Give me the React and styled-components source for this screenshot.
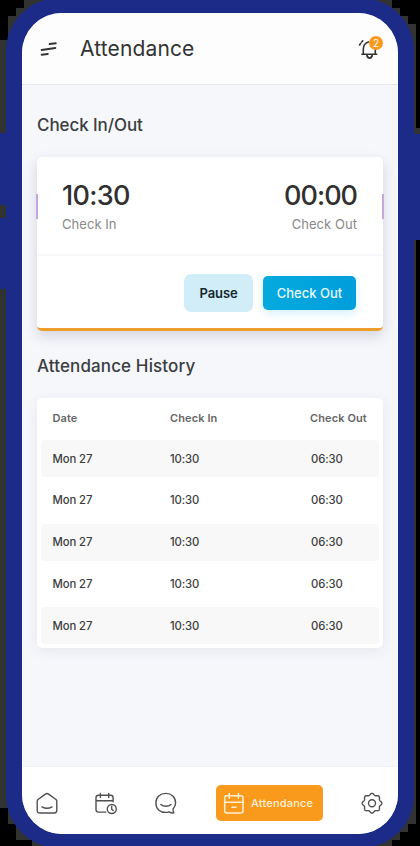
import React from "react";
import styled, { createGlobalStyle, css } from "styled-components";

const GlobalStyle = createGlobalStyle`
  *, *::before, *::after { box-sizing: border-box; }
  html, body { margin: 0; background: #000; }
  body { font-family: Inter, "Liberation Sans", sans-serif; color: #333; }
  button { font-family: inherit; border: 0; padding: 0; margin: 0; cursor: pointer; }
  h1, h2, p { margin: 0; }
`;

const block = (color, x, y, w, h) =>
  `linear-gradient(${color}, ${color}) ${x}px ${y}px / ${w}px ${h}px no-repeat`;

const backdrop = [
  block("#000", 0, 0, 24, 8),
  block("#000", 0, 8, 16, 8),
  block("#000", 0, 16, 8, 24),
  block("#1d2b88", 0, 133, 12, 72),
  block("#1d2b88", 0, 218, 12, 71),
  block("#000", 0, 808, 8, 38),
  block("#000", 8, 824, 8, 22),
  block("#000", 16, 840, 16, 6),
  block("#313331", 0, 0, 60, 846),
  block("#1d2b88", 408, 134, 12, 106),
  block("#000", 392, 0, 28, 8),
  block("#000", 400, 8, 20, 8),
  block("#000", 408, 16, 12, 8),
  block("#000", 408, 824, 12, 22),
  block("#000", 400, 832, 20, 14),
  block("#000", 392, 840, 28, 6),
  block("#333", 416, 128, 4, 8),
  block("#333", 360, 0, 56, 846),
].join(", ");

const Device = styled.div`
  width: 420px;
  height: 846px;
  padding: 0 6px;
  overflow: hidden;
  background: ${backdrop};
`;

const Bezel = styled.div`
  width: 408px;
  height: 850px;
  margin-top: -2px;
  padding: 15px 16px 14px;
  border-radius: 53px;
  background: #1d2b88;
`;

const Screen = styled.main`
  display: flex;
  flex-direction: column;
  width: 376px;
  height: 821px;
  overflow: hidden;
  border-radius: 40px;
  background: #f5f7fb;
`;

const Header = styled.header`
  display: flex;
  align-items: center;
  flex: none;
  height: 72px;
  padding: 1px 14px 0 18px;
  background: #fdfdfd;
  border-bottom: 1px solid #e5e7eb;
`;

const Title = styled.h1`
  flex: 1;
  margin-left: 22px;
  font-size: 21px;
  line-height: 28px;
  font-weight: 400;
  letter-spacing: 0.14px;
`;

const Alerts = styled.div`
  position: relative;
  width: 26px;
  height: 26px;
`;

const AlertCount = styled.span`
  position: absolute;
  top: 0;
  right: 1px;
  width: 14px;
  height: 14px;
  border-radius: 50%;
  background: #f99a1c;
  color: #fff;
  font-size: 10px;
  line-height: 14px;
  text-align: center;
`;

const Icon = styled.svg`
  display: block;
  flex: none;
  fill: none;
  stroke: currentColor;
  stroke-width: ${(p) => p.$weight || 1.4};
  stroke-linecap: round;
  stroke-linejoin: round;
`;

const Content = styled.div`
  flex: 1;
  padding: 28px 15px 0;
`;

const SectionTitle = styled.h2`
  height: 24px;
  font-size: 17px;
  line-height: 24px;
  font-weight: 500;
  color: #3b3d42;
  letter-spacing: ${(p) => p.$spacing || "0"};
`;

const TimeCard = styled.section`
  position: relative;
  height: 174px;
  margin: 20px 0 23px;
  border-radius: 5px;
  border-bottom: 3px solid #ec9d2b;
  background: #fff;
  box-shadow: 0 5px 13px rgba(50, 45, 85, 0.17);
`;

const EdgeMark = styled.span`
  position: absolute;
  top: 37px;
  ${(p) => p.$side}: -1px;
  width: 2px;
  height: 25px;
  background: #c3a7dd;
`;

const Times = styled.div`
  display: flex;
  justify-content: space-between;
  height: 99px;
  padding: 23px 26px 0 25px;
  border-bottom: 2px solid #f7f7f9;
`;

const TimeBlock = styled.div`
  text-align: ${(p) => p.$align || "left"};
`;

const TimeValue = styled.p`
  font-size: 27px;
  line-height: 32px;
  font-weight: 500;
  color: #303030;
  letter-spacing: ${(p) => p.$spacing};
`;

const TimeLabel = styled.p`
  margin-top: 3px;
  font-size: 13px;
  line-height: 18px;
  color: #888;
  letter-spacing: 0.05px;
`;

const Actions = styled.div`
  display: flex;
  align-items: center;
  justify-content: flex-end;
  gap: 10px;
  height: 73px;
  padding: 1px 27px 0 0;
`;

const ActionButton = styled.button`
  font-size: 13px;
  font-weight: 500;
  ${(p) =>
    p.$primary
      ? css`
          width: 93px;
          height: 34px;
          border-radius: 5px;
          color: #e9f9ff;
          background: linear-gradient(90deg, #05aade, #009edb);
          box-shadow: 0 3px 10px rgba(0, 165, 225, 0.18);
        `
      : css`
          width: 69px;
          height: 38px;
          border-radius: 7px;
          color: #15272f;
          font-weight: 600;
          letter-spacing: -0.1px;
          background: #d1edf8;
        `}
`;

const HistoryCard = styled.section`
  height: 250px;
  margin-top: 20px;
  padding: 0 4px;
  border-radius: 5px;
  background: #fff;
  box-shadow: 0 3px 13px rgba(50, 45, 85, 0.08);
`;

const HistoryRow = styled.div`
  display: grid;
  grid-template-columns: 117.5px 141px 1fr;
  align-items: center;
  height: 37px;
  margin-bottom: 4.75px;
  padding-left: 11.5px;
  border-radius: 4px;
  background: ${(p) => (p.$shaded ? "#f8f8f8" : "transparent")};
  font-size: 11.3px;
  font-weight: 500;
  letter-spacing: -0.1px;
  color: #3e3e3e;
`;

const HistoryHead = styled(HistoryRow)`
  height: 42px;
  margin-bottom: 0;
  padding-bottom: 2px;
  grid-template-columns: 117.5px 140px 1fr;
  font-size: 11px;
  font-weight: 600;
  letter-spacing: 0.1px;
  color: #666;
`;

const BottomNav = styled.nav`
  display: flex;
  align-items: center;
  flex: none;
  height: 68px;
  padding: 4px 14px 0 13px;
  background: #fff;
  border-top: 1px solid #eef0f5;
  color: #505050;
`;

const NavItem = styled.div`
  width: 24px;
  height: 24px;
  margin-right: ${(p) => p.$gap || 0}px;
`;

const ActiveItem = styled.div`
  display: flex;
  align-items: center;
  gap: 5px;
  width: 107px;
  height: 36px;
  margin-right: 37px;
  padding-left: 6px;
  border-radius: 5px;
  background: #f99a1c;
  color: #fff0d8;
  font-size: 11px;
  font-weight: 500;
  letter-spacing: 0.2px;
`;

const MenuIcon = () => (
  <Icon width="18" height="18" viewBox="0 0 18 18" $weight={2}>
    <path d="M9.7 4.1 15.8 3.2M1.7 9.9 15.3 7.9M1.7 14.7 7.8 13.9" />
  </Icon>
);

const BellIcon = () => (
  <Icon width="26" height="26" viewBox="0 0 26 26" $weight={1.6}>
    <path d="M3.9 18.2H18.7M5.3 18.2v-5c0-3.6 1.8-6.3 5-7.3M17.3 18.2V12M8.8 18.4c.3 4.9 5.2 4.9 5.6 0M1.6 9l1-1.7M3.7 6l1-1.1" />
  </Icon>
);

const HomeIcon = () => (
  <Icon width="24" height="24" viewBox="0 0 24 24">
    <path d="M2.2 10.3c0-1 .4-1.6 1.2-2.1l7-5.1c1.1-.8 2.1-.8 3.2 0l7 5.1c.8.5 1.2 1.1 1.2 2.1V19.6c0 1.6-.8 2.4-2.4 2.4H4.6c-1.6 0-2.4-.8-2.4-2.4ZM7 15.9c3 1.7 7 1.7 10 0" />
  </Icon>
);

const ScheduleIcon = () => (
  <Icon width="24" height="24" viewBox="0 0 24 24">
    <path d="M11.8 21.1H4.6c-1.6 0-2.6-1-2.6-2.6V6.7c0-1.5 1-2.4 2.6-2.4h12c1.6 0 2.5.9 2.5 2.4v4.1M2 9.7h17.1M6.4 2.5v4.1M14.7 2.5v4.1" />
    <circle cx="17.8" cy="18" r="4.5" />
    <path d="M17.7 15.5v2.7l1.4 1.4" />
  </Icon>
);

const ChatIcon = () => (
  <Icon width="24" height="24" viewBox="0 0 24 24">
    <path d="M19 17.9c1.6-1.6 2.6-3.4 2.6-6 0-5.6-4.2-9.5-9.8-9.5S1.9 6.3 1.9 11.9c0 6 4.1 9.5 9.7 9.5 1.3 0 2.3-.2 3.4-.6 1.4.8 3 1.3 4.8 1.1-.7-1.2-.9-2.4-.8-4ZM6.8 13.4c2.7 2.5 7.5 2.5 10.2 0" />
  </Icon>
);

const AttendanceIcon = () => (
  <Icon width="24" height="24" viewBox="0 0 24 24" $weight={1.5}>
    <rect x="2.7" y="4.7" width="18.3" height="17.2" rx="1.8" />
    <path d="M2.7 11.2H21M7.3 2.4v4.8M16.4 2.4v4.8M10 16.2h4" />
  </Icon>
);

const gearPath = (() => {
  const points = [];
  for (let i = 0; i < 144; i += 1) {
    const a = (i / 144) * Math.PI * 2;
    const r = 9 + 0.85 * Math.cos(8 * a);
    points.push(`${(12 + r * Math.cos(a)).toFixed(2)} ${(12.2 + r * Math.sin(a)).toFixed(2)}`);
  }
  return `M${points.join("L")}Z`;
})();

const GearIcon = () => (
  <Icon width="24" height="24" viewBox="0 0 24 24">
    <path d={gearPath} />
    <circle cx="12" cy="12.2" r="3.5" />
  </Icon>
);

const history = Array.from({ length: 5 }, () => ({
  date: "Mon 27",
  checkIn: "10:30",
  checkOut: "06:30",
}));

export default function App() {
  return (
    <>
      <GlobalStyle />
      <Device>
        <Bezel>
          <Screen>
            <Header>
              <MenuIcon />
              <Title>Attendance</Title>
              <Alerts>
                <BellIcon />
                <AlertCount>2</AlertCount>
              </Alerts>
            </Header>
            <Content>
              <SectionTitle $spacing="-0.08px">Check In/Out</SectionTitle>
              <TimeCard>
                <EdgeMark $side="left" />
                <EdgeMark $side="right" />
                <Times>
                  <TimeBlock>
                    <TimeValue $spacing="-0.7px">10:30</TimeValue>
                    <TimeLabel>Check In</TimeLabel>
                  </TimeBlock>
                  <TimeBlock $align="right">
                    <TimeValue $spacing="-1px">00:00</TimeValue>
                    <TimeLabel>Check Out</TimeLabel>
                  </TimeBlock>
                </Times>
                <Actions>
                  <ActionButton>Pause</ActionButton>
                  <ActionButton $primary>Check Out</ActionButton>
                </Actions>
              </TimeCard>
              <SectionTitle $spacing="0.12px">Attendance History</SectionTitle>
              <HistoryCard>
                <HistoryHead>
                  <span>Date</span>
                  <span>Check In</span>
                  <span>Check Out</span>
                </HistoryHead>
                {history.map((entry, i) => (
                  <HistoryRow key={i} $shaded={i % 2 === 0}>
                    <span>{entry.date}</span>
                    <span>{entry.checkIn}</span>
                    <span>{entry.checkOut}</span>
                  </HistoryRow>
                ))}
              </HistoryCard>
            </Content>
            <BottomNav>
              <NavItem $gap={35}><HomeIcon /></NavItem>
              <NavItem $gap={36}><ScheduleIcon /></NavItem>
              <NavItem $gap={38}><ChatIcon /></NavItem>
              <ActiveItem>
                <AttendanceIcon />
                <span>Attendance</span>
              </ActiveItem>
              <NavItem><GearIcon /></NavItem>
            </BottomNav>
          </Screen>
        </Bezel>
      </Device>
    </>
  );
}
